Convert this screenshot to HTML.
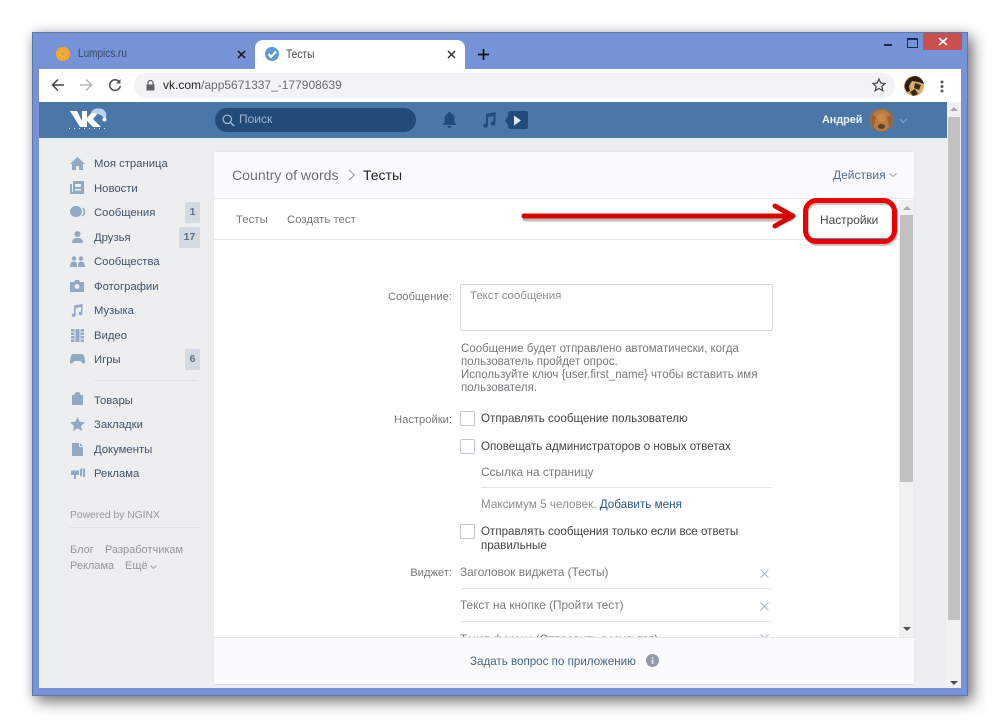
<!DOCTYPE html>
<html><head><meta charset="utf-8">
<style>
html,body{margin:0;padding:0;background:#fff;width:1000px;height:728px;overflow:hidden}
body{font-family:"Liberation Sans","Noto Sans CJK SC",sans-serif;font-size:12px;position:relative}
.a{position:absolute;white-space:nowrap}
.m{position:absolute;left:94px;color:#3f536a;font-size:11.3px;line-height:16px;white-space:nowrap}
.b{position:absolute;background:#d3dae3;color:#5b7390;font-size:10.5px;font-weight:bold;text-align:center;border-radius:2px;height:21px;line-height:21px}
.l{position:absolute;color:#77797c;font-size:11.2px;line-height:16px;text-align:right;white-space:nowrap}
.t{position:absolute;left:481px;color:#444;font-size:11.6px;line-height:14px;white-space:nowrap}
.h{position:absolute;left:461px;color:#77797c;font-size:11.5px;line-height:13px;white-space:nowrap}
.c{position:absolute;left:460px;width:13px;height:13px;border:1px solid #c1c7cf;border-radius:2px;background:#fff}
svg{position:absolute;overflow:visible}
</style></head>
<body>
<div class="a" style="left:32px;top:32px;width:936px;height:664px;background:#7593d6;border:1px solid #5f76ac;box-sizing:border-box;box-shadow:5px 6px 14px rgba(0,0,0,.5),0 0 10px rgba(0,0,0,.15)"></div>

<!-- tabs -->
<div class="a" style="left:255px;top:40px;width:210px;height:29px;background:#fff;border-radius:8px 8px 0 0"></div>
<svg style="left:56px;top:47px" width="15" height="15" viewBox="0 0 15 15"><circle cx="7" cy="7" r="7" fill="#f6a62b"/><circle cx="7" cy="7" r="4" fill="#f8b84e"/><path d="M7 1V13M1 7H13M3 3L11 11M11 3L3 11" stroke="#f09a1c" stroke-width=".8"/></svg>
<div class="a" style="left:78px;top:47px;font-size:11.5px;line-height:15px;color:#39486a;transform:scaleX(.87);transform-origin:left">Lumpics.ru</div>
<svg style="left:237px;top:50px" width="9" height="9"><path d="M1 1L8 8M8 1L1 8" stroke="#222" stroke-width="1.6"/></svg>
<svg style="left:265px;top:47px" width="15" height="15" viewBox="0 0 15 15"><circle cx="7" cy="7" r="7" fill="#5b9bd8"/><path d="M3.5 7L6 10L11 4.5" stroke="#fff" stroke-width="2.2" fill="none"/></svg>
<div class="a" style="left:286px;top:47px;font-size:12px;line-height:15px;color:#444;transform:scaleX(.85);transform-origin:left">Тесты</div>
<svg style="left:447px;top:50px" width="9" height="9"><path d="M1 1L8 8M8 1L1 8" stroke="#333" stroke-width="1.5"/></svg>
<svg style="left:478px;top:49px" width="11" height="11"><path d="M5.5 0V11M0 5.5H11" stroke="#111" stroke-width="1.7"/></svg>

<!-- window buttons -->
<div class="a" style="left:884px;top:44px;width:8px;height:2px;background:#1d2c4e"></div>
<div class="a" style="left:907px;top:38px;width:9px;height:7px;border:1px solid #1d2c4e;border-top-width:2px;box-sizing:content-box"></div>
<div class="a" style="left:923px;top:33px;width:39px;height:17px;background:#c9504f"></div>
<svg style="left:938px;top:37px" width="10" height="9"><path d="M1 1L9 8M9 1L1 8" stroke="#fff" stroke-width="1.6"/></svg>

<!-- toolbar -->
<div class="a" style="left:39px;top:69px;width:922px;height:33px;background:#fff"></div>
<div class="a" style="left:134px;top:73px;width:761px;height:25px;background:#f1f3f4;border-radius:13px"></div>
<svg style="left:51px;top:78px" width="14" height="14" viewBox="0 0 14 14"><path d="M13 7H2M7 1.5L1.5 7L7 12.5" stroke="#444" stroke-width="1.5" fill="none"/></svg>
<svg style="left:79px;top:78px" width="14" height="14" viewBox="0 0 14 14"><path d="M1 7H12M7 1.5L12.5 7L7 12.5" stroke="#b5b7ba" stroke-width="1.5" fill="none"/></svg>
<svg style="left:108px;top:78px" width="14" height="14" viewBox="0 0 14 14"><path d="M11.5 4.2A5.3 5.3 0 1 0 12.3 8" stroke="#555" stroke-width="1.6" fill="none"/><path d="M12.5 1V5.5H8Z" fill="#555"/></svg>
<svg style="left:146px;top:80px" width="9" height="11" viewBox="0 0 9 11"><path d="M2 5V3a2.5 2.5 0 0 1 5 0V5" stroke="#5f6368" stroke-width="1.2" fill="none"/><rect x="0.5" y="4.5" width="8" height="6" fill="#5f6368"/></svg>
<div class="a" style="left:163px;top:78px;font-size:12px;line-height:15px;color:#6a6d71"><span style="color:#222">vk.com</span>/app5671337_-177908639</div>
<svg style="left:872px;top:78px" width="14" height="14" viewBox="0 0 14 14"><path d="M7 1L8.8 5.1L13 5.5L9.8 8.4L10.8 12.7L7 10.4L3.2 12.7L4.2 8.4L1 5.5L5.2 5.1Z" stroke="#444" stroke-width="1.2" fill="none"/></svg>
<svg style="left:904px;top:76px" width="20" height="20" viewBox="0 0 20 20"><circle cx="10" cy="10" r="10" fill="#d9ad68"/><path d="M1 8C3 2 8 0 12 0C16 1 19 4 20 8L14 6L8 5L5 10L6 15L3 16C1 13 0 11 1 8Z" fill="#2b2019"/><path d="M11 7L17 9L15 14L10 12Z" fill="#3b2a1c"/><path d="M6 16L11 13L14 18L9 20Z" fill="#33261b"/></svg>
<svg style="left:940px;top:80px" width="4" height="13"><circle cx="2" cy="2" r="1.5" fill="#555"/><circle cx="2" cy="6.5" r="1.5" fill="#555"/><circle cx="2" cy="11" r="1.5" fill="#555"/></svg>

<!-- vk page -->
<div class="a" style="left:39px;top:102px;width:908px;height:586px;background:#edeef0"></div>
<div class="a" style="left:39px;top:102px;width:908px;height:36px;background:#4a76a8"></div>
<svg style="left:69px;top:108px" width="38" height="22" viewBox="0 0 38 22"><path d="M1 3H8L13 13V3H18V10L24 3H31L24 11L32 19H24L18 13V19H11Z" fill="#fff"/><path d="M22 5C23 0 31 -1 35 2C38 5 38 9 36 11L33 8C30 6 26 5 22 5Z" fill="#b9d3ef"/><circle cx="35.500" cy="11.500" r="2" fill="#fff"/><path d="M0 20.500H38" stroke="#e6eef7" stroke-width="1" stroke-dasharray="1 4"/></svg>
<div class="a" style="left:215px;top:108px;width:201px;height:24px;background:#224b7a;border-radius:12px"></div>
<svg style="left:222px;top:114px" width="13" height="13" viewBox="0 0 13 13"><circle cx="5.3" cy="5.3" r="4.2" stroke="#9fb6d0" stroke-width="1.3" fill="none"/><path d="M8.5 8.5L12 12" stroke="#9fb6d0" stroke-width="1.4"/></svg>
<div class="a" style="left:239px;top:112px;font-size:12px;line-height:15px;color:#9fb6d0">Поиск</div>
<svg style="left:442px;top:112px" width="15" height="16" viewBox="0 0 15 16"><path d="M7.5 0C9 0 9 1 9 1.5C11.5 2.3 12.5 4 12.5 7V10.5L14.5 13H.5L2.5 10.5V7C2.5 4 3.5 2.3 6 1.5C6 1 6 0 7.5 0ZM5.5 14H9.5C9.500 15.3 8.500 16 7.500 16S5.500 15.3 5.500 14Z" fill="#224b7a"/></svg>
<svg style="left:482px;top:112px" width="14" height="16" viewBox="0 0 14 16"><path d="M4 2L13.5 0V11.5A2.4 2.2 0 1 1 11.5 9.4V4L6 5V13.5A2.4 2.2 0 1 1 4 11.4Z" fill="#224b7a"/></svg>
<div class="a" style="left:508px;top:111px;width:20px;height:18px;background:#224b7a;border-radius:2px"></div>
<svg style="left:505px;top:115px" width="20" height="11"><path d="M3 1L0 5.500L3 10Z" fill="#224b7a"/><path d="M9 .5L16 5.500L9 10.500Z" fill="#dfe8f3"/></svg>
<div class="a" style="left:822px;top:113px;font-size:10.800px;line-height:15px;font-weight:bold;color:#f0f4f9">Андрей</div>
<svg style="left:869px;top:108px" width="25" height="24" viewBox="0 0 25 24"><ellipse cx="12.500" cy="12" rx="12.500" ry="12" fill="#87705a"/><path d="M3 9C5 3 9 2 12.500 2S20 3 22 9L21 17C19 21 16 23 12.500 23S6 21 4 17Z" fill="#bd7a3f"/><path d="M4 7C1 11 2 16 5 18L7 9ZM21 7C24 11 23 16 20 18L18 9Z" fill="#a0602f"/><path d="M8 8C10 5 15 5 17 8L16 14H9Z" fill="#c98a48"/><ellipse cx="12.500" cy="18.500" rx="3.500" ry="2.500" fill="#5a4030"/></svg>
<svg style="left:899px;top:118px" width="9" height="6"><path d="M1 1L4.500 4.500L8 1" stroke="#81a4cb" stroke-width="1.1" fill="none"/></svg>

<!-- outer scrollbar -->
<div class="a" style="left:947px;top:102px;width:14px;height:586px;background:#f1f1f1"></div>
<div class="a" style="left:948px;top:117px;width:12px;height:503px;background:#c1c1c1"></div>
<svg style="left:950px;top:107px" width="8" height="5"><path d="M4 0L8 4H0Z" fill="#a8a8a8"/></svg>
<svg style="left:950px;top:680px" width="8" height="5"><path d="M4 5L8 1H0Z" fill="#505050"/></svg>

<!-- sidebar -->
<svg style="left:70px;top:157px" width="15" height="13" viewBox="0 0 15 13"><path d="M7.500 0L15 7H13V13H9V9H6V13H2V7H0Z" fill="#91a9c4"/></svg>
<div class="m" style="top:156px">Моя страница</div>
<svg style="left:70px;top:181px" width="14" height="13" viewBox="0 0 14 13"><path d="M0 3H2V11H3V0H14V13H0Z" fill="#91a9c4"/><rect x="5" y="3" width="6" height="3" fill="#edeef0"/><rect x="5" y="8" width="6" height="1.500" fill="#edeef0"/></svg>
<div class="m" style="top:181px">Новости</div>
<svg style="left:70px;top:206px" width="15" height="12" viewBox="0 0 15 12"><ellipse cx="6" cy="5.500" rx="6" ry="5.500" fill="#91a9c4"/><path d="M13 2C15 4 15 8 12.500 10" stroke="#91a9c4" stroke-width="1.500" fill="none"/></svg>
<div class="m" style="top:205px">Сообщения</div>
<div class="b" style="left:185px;top:202px;width:15px">1</div>
<svg style="left:72px;top:231px" width="11" height="12" viewBox="0 0 11 12"><circle cx="5.500" cy="3" r="3" fill="#91a9c4"/><path d="M0 12C0 8 2.500 7 5.500 7S11 8 11 12Z" fill="#91a9c4"/></svg>
<div class="m" style="top:230px">Друзья</div>
<div class="b" style="left:179px;top:227px;width:21px">17</div>
<svg style="left:70px;top:256px" width="15" height="11" viewBox="0 0 15 11"><circle cx="4" cy="2.500" r="2.200" fill="#91a9c4"/><circle cx="11" cy="2.500" r="2.200" fill="#91a9c4"/><path d="M0 11C0 7 1.500 5.500 4 5.500S7 7 7 11ZM8 11C8 7 9 5.500 11 5.500S15 7 15 11Z" fill="#91a9c4"/></svg>
<div class="m" style="top:254px">Сообщества</div>
<svg style="left:70px;top:280px" width="14" height="12" viewBox="0 0 14 12"><path d="M0 2H4L5 0H9L10 2H14V12H0Z" fill="#91a9c4"/><circle cx="7" cy="6.500" r="2.400" fill="#edeef0"/></svg>
<div class="m" style="top:279px">Фотографии</div>
<svg style="left:71px;top:304px" width="12" height="13" viewBox="0 0 12 13"><path d="M3 1.500L11.500 0V9.500A2 1.800 0 1 1 10 7.800V3L4.700 4V11A2 1.800 0 1 1 3 9.400Z" fill="#91a9c4"/></svg>
<div class="m" style="top:303px">Музыка</div>
<svg style="left:71px;top:329px" width="13" height="13" viewBox="0 0 13 13"><rect width="13" height="13" fill="#91a9c4"/><path d="M4 0V13M9 0V13" stroke="#edeef0" stroke-width="1"/><path d="M0 3H3M0 6.500H3M0 10H3M10 3H13M10 6.500H13M10 10H13" stroke="#edeef0" stroke-width="1"/></svg>
<div class="m" style="top:328px">Видео</div>
<svg style="left:70px;top:354px" width="15" height="10" viewBox="0 0 15 10"><path d="M3 0H12C14 0 15 5 15 8C15 10 13 10 12 8.500L10.500 7H4.500L3 8.500C2 10 0 10 0 8C0 5 1 0 3 0Z" fill="#91a9c4"/></svg>
<div class="m" style="top:352px">Игры</div>
<div class="b" style="left:185px;top:349px;width:15px">6</div>
<div class="a" style="left:94px;top:380px;width:103px;height:1px;background:#dfe2e8"></div>
<svg style="left:72px;top:392px" width="11" height="13" viewBox="0 0 11 13"><path d="M0 3H2.500C2.500 1 4 0 5.500 0S8.500 1 8.500 3H11V13H0Z" fill="#91a9c4"/></svg>
<div class="m" style="top:393px">Товары</div>
<svg style="left:70px;top:417px" width="15" height="14" viewBox="0 0 15 14"><path d="M7.500 0L9.700 4.800L15 5.400L11 9L12.200 14L7.500 11.400L2.800 14L4 9L0 5.400L5.300 4.800Z" fill="#91a9c4"/></svg>
<div class="m" style="top:417px">Закладки</div>
<svg style="left:72px;top:443px" width="11" height="13" viewBox="0 0 11 13"><path d="M0 0H7V4H11V13H0ZM8 0L11 3H8Z" fill="#91a9c4"/></svg>
<div class="m" style="top:442px">Документы</div>
<svg style="left:71px;top:468px" width="14" height="11" viewBox="0 0 14 11"><path d="M0 2.500H8V7H5V11H3V7H0ZM9 1.500L11 0V9L9 7.500ZM12 .5H14V9H12Z" fill="#91a9c4"/></svg>
<div class="m" style="top:466px">Реклама</div>
<div class="a" style="left:70px;top:509px;font-size:10.300px;line-height:14px;color:#939699">Powered by NGINX</div>
<div class="a" style="left:70px;top:527px;width:130px;height:1px;background:#dfe2e8"></div>
<div class="a" style="left:70px;top:543px;font-size:11px;line-height:14px;color:#939699">Блог</div>
<div class="a" style="left:105px;top:543px;font-size:11px;line-height:14px;color:#939699">Разработчикам</div>
<div class="a" style="left:70px;top:559px;font-size:11px;line-height:14px;color:#939699">Реклама</div>
<div class="a" style="left:125px;top:559px;font-size:11px;line-height:14px;color:#939699">Ещё</div>
<svg style="left:150px;top:565px" width="7" height="5"><path d="M.5 .5L3.500 3.500L6.500 .5" stroke="#a4a7ab" fill="none"/></svg>

<!-- card -->
<div class="a" style="left:214px;top:152px;width:700px;height:532px;background:#fff;border-radius:2px;box-shadow:0 1px 0 #d7d8db,0 0 0 1px #e7e8ec"></div>
<div class="a" style="left:214px;top:152px;width:700px;height:47px;background:#fafbfc;border-bottom:1px solid #e7e8ec;box-sizing:border-box"></div>
<div class="a" style="left:232px;top:166px;font-size:14.100px;line-height:18px;color:#6d7175">Country of words</div>
<svg style="left:348px;top:169px" width="8" height="12"><path d="M1 1L6.500 6L1 11" stroke="#939699" stroke-width="1" fill="none"/></svg>
<div class="a" style="left:363px;top:166px;font-size:14px;line-height:18px;color:#222">Тесты</div>
<div class="a" style="left:833px;top:167px;font-size:12px;line-height:16px;color:#56708f">Действия</div>
<svg style="left:889px;top:173px" width="8" height="5"><path d="M.5 .5L4 3.500L7.500 .5" stroke="#8fa4bd" fill="none"/></svg>

<div class="a" style="left:214px;top:239px;width:685px;height:1px;background:#e7e8ec"></div>
<div class="a" style="left:236px;top:213px;font-size:11.400px;line-height:15px;color:#77797c">Тесты</div>
<div class="a" style="left:287px;top:213px;font-size:11.400px;line-height:15px;color:#77797c">Создать тест</div>
<div class="a" style="left:820px;top:213px;font-size:11.900px;line-height:15px;color:#444">Настройки</div>
<div class="a" style="left:810px;top:238px;width:76px;height:2px;background:#5b7fae"></div>

<!-- inner scrollbar -->
<div class="a" style="left:899px;top:200px;width:15px;height:437px;background:#f1f1f1"></div>
<div class="a" style="left:900px;top:215px;width:13px;height:267px;background:#c1c1c1"></div>
<svg style="left:903px;top:206px" width="8" height="5"><path d="M4 0L8 4H0Z" fill="#a8a8a8"/></svg>
<svg style="left:903px;top:626px" width="8" height="5"><path d="M4 5L8 1H0Z" fill="#505050"/></svg>

<!-- form -->
<div class="l" style="left:352px;width:100px;top:289px">Сообщение:</div>
<div class="a" style="left:460px;top:284px;width:313px;height:47px;border:1px solid #d3d9de;border-radius:2px;box-sizing:border-box;background:#fff"></div>
<div class="a" style="left:470px;top:289px;font-size:11.400px;line-height:15px;color:#8b8e92">Текст сообщения</div>
<div class="h" style="top:343px">Сообщение будет отправлено автоматически, когда</div>
<div class="h" style="top:356px">пользователь пройдет опрос.</div>
<div class="h" style="top:369px">Используйте ключ {user.first_name} чтобы вставить имя</div>
<div class="h" style="top:382px">пользователя.</div>
<div class="l" style="left:352px;width:100px;top:412px">Настройки:</div>
<div class="c" style="top:411px"></div>
<div class="t" style="top:412px">Отправлять сообщение пользователю</div>
<div class="c" style="top:439px"></div>
<div class="t" style="top:440px">Оповещать администраторов о новых ответах</div>
<div class="a" style="left:481px;top:465px;font-size:11.900px;line-height:15px;color:#77797c">Ссылка на страницу</div>
<div class="a" style="left:481px;top:487px;width:291px;height:1px;background:#e3e5e8"></div>
<div class="a" style="left:481px;top:497px;font-size:11.700px;line-height:15px;color:#8b8e92">Максимум 5 человек. <span style="color:#2a5885">Добавить меня</span></div>
<div class="c" style="top:524px"></div>
<div class="t" style="top:525px">Отправлять сообщения только если все ответы</div>
<div class="t" style="top:539px">правильные</div>
<div class="l" style="left:352px;width:100px;top:565px">Виджет:</div>
<div class="a" style="left:460px;top:565px;font-size:11.800px;line-height:15px;color:#77797c">Заголовок виджета (Тесты)</div>
<svg style="left:760px;top:569px" width="9" height="9"><path d="M.5 .5L8.500 8.500M8.500 .5L.5 8.500" stroke="#a9b8c9" stroke-width="1"/></svg>
<div class="a" style="left:461px;top:588px;width:311px;height:1px;background:#e3e5e8"></div>
<div class="a" style="left:460px;top:598px;font-size:11.800px;line-height:15px;color:#77797c">Текст на кнопке (Пройти тест)</div>
<svg style="left:760px;top:602px" width="9" height="9"><path d="M.5 .5L8.500 8.500M8.500 .5L.5 8.500" stroke="#a9b8c9" stroke-width="1"/></svg>
<div class="a" style="left:461px;top:621px;width:311px;height:1px;background:#e3e5e8"></div>
<div class="a" style="left:460px;top:632px;font-size:11.800px;line-height:15px;color:#77797c">Текст формы (Отправить результат)</div>
<svg style="left:760px;top:634px" width="9" height="9"><path d="M.5 .5L8.500 8.500M8.500 .5L.5 8.500" stroke="#a9b8c9" stroke-width="1"/></svg>

<!-- footer -->
<div class="a" style="left:214px;top:637px;width:700px;height:47px;background:#fafbfc;border-top:1px solid #e7e8ec;box-sizing:border-box"></div>
<div class="a" style="left:470px;top:654px;font-size:11.600px;line-height:15px;color:#4a6382">Задать вопрос по приложению</div>
<svg style="left:646px;top:654px" width="13" height="13" viewBox="0 0 13 13"><circle cx="6.500" cy="6.500" r="6.500" fill="#939ba6"/><rect x="5.700" y="5.500" width="1.700" height="4.500" fill="#e8eaed"/><rect x="5.700" y="3" width="1.700" height="1.600" fill="#e8eaed"/></svg>

<!-- annotation -->
<svg style="left:0;top:0" width="1000" height="728" viewBox="0 0 1000 728">
<path d="M524 217H790" stroke="#6b6b6b" stroke-opacity=".45" stroke-width="5" stroke-linecap="round" transform="translate(1 2)"/>
<rect x="805.500" y="200.500" width="89" height="41" rx="11" fill="none" stroke="#6b6b6b" stroke-opacity=".4" stroke-width="5" transform="translate(1 2)"/>
<path d="M524 216H790" stroke="#d80000" stroke-width="5" stroke-linecap="round"/>
<path d="M775 206L793 216L775 226" stroke="#d80000" stroke-width="5" fill="none" stroke-linecap="round" stroke-linejoin="round"/>
<rect x="805.500" y="200.500" width="89" height="41" rx="11" fill="none" stroke="#ee0000" stroke-width="5"/>
</svg>
</body></html>
